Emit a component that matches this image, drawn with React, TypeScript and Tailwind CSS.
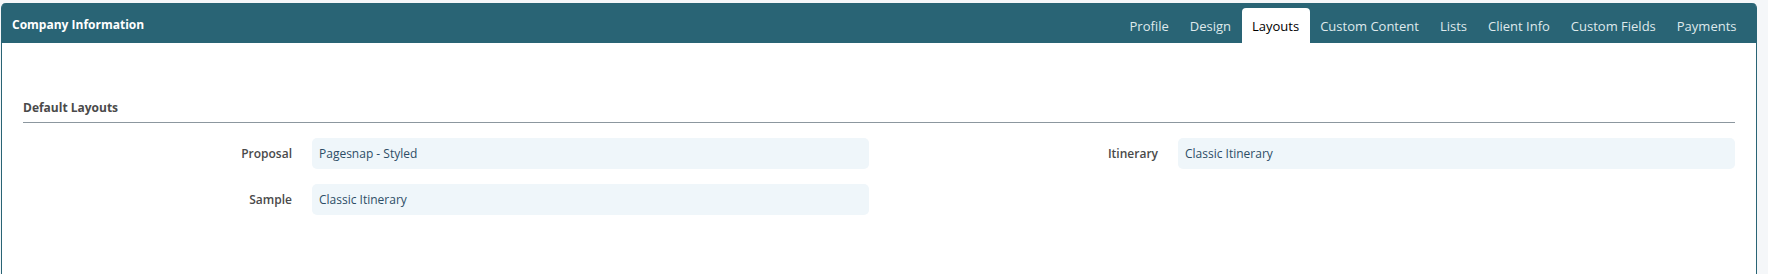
import React from "react";

const tabs = ["Profile", "Design", "Layouts", "Custom Content", "Lists", "Client Info", "Custom Fields", "Payments"];

function Field({ label, value }: { label: string; value: string }) {
  return (
    <div className="flex items-center">
      <div className="w-[269px] shrink-0 text-right text-[12px] font-semibold text-[#4a4a4a]">{label}</div>
      <div className="ml-[20px] flex h-[31px] flex-1 items-center rounded-[5px] bg-[#eff6fa] px-[7px] text-[12px] text-[#2d4d66]">
        {value}
      </div>
    </div>
  );
}

export default function App() {
  return (
    <div
      className="h-[274px] w-[1768px] overflow-hidden bg-[#f5f7f9] pl-[1px] pr-[11px] pt-[3px]"
      style={{ fontFamily: '"Open Sans", "Noto Sans", sans-serif' }}
    >
      <div className="h-[271px] rounded-t-[5px] border-x border-[#296475] bg-white">
        <div className="flex h-[40px] items-end justify-between rounded-t-[4px] bg-[#296475] pl-[10px] pr-[9px]">
          <div className="self-center pt-[4px] text-[12px] font-bold text-white">Company Information</div>
          <div className="flex">
            {tabs.map((t) =>
              t === "Layouts" ? (
                <div key={t} className="flex h-[35px] items-center rounded-t-[4px] bg-white px-[10.5px] pt-[3px] text-[13px] text-black">
                  {t}
                </div>
              ) : (
                <div key={t} className="flex h-[35px] items-center px-[10.5px] pt-[3px] text-[13px] text-[#dfe9ec]">
                  {t}
                </div>
              )
            )}
          </div>
        </div>
        <div className="px-[21px] pt-[56px]">
          <div className="border-b border-[#8c979f] pb-[5px] text-[12px] font-bold text-[#4a4a4a]">Default Layouts</div>
          <div className="mt-[15px] grid grid-cols-2 gap-x-[20px] gap-y-[15px]">
            <Field label="Proposal" value="Pagesnap - Styled" />
            <Field label="Itinerary" value="Classic Itinerary" />
            <Field label="Sample" value="Classic Itinerary" />
          </div>
        </div>
      </div>
    </div>
  );
}
